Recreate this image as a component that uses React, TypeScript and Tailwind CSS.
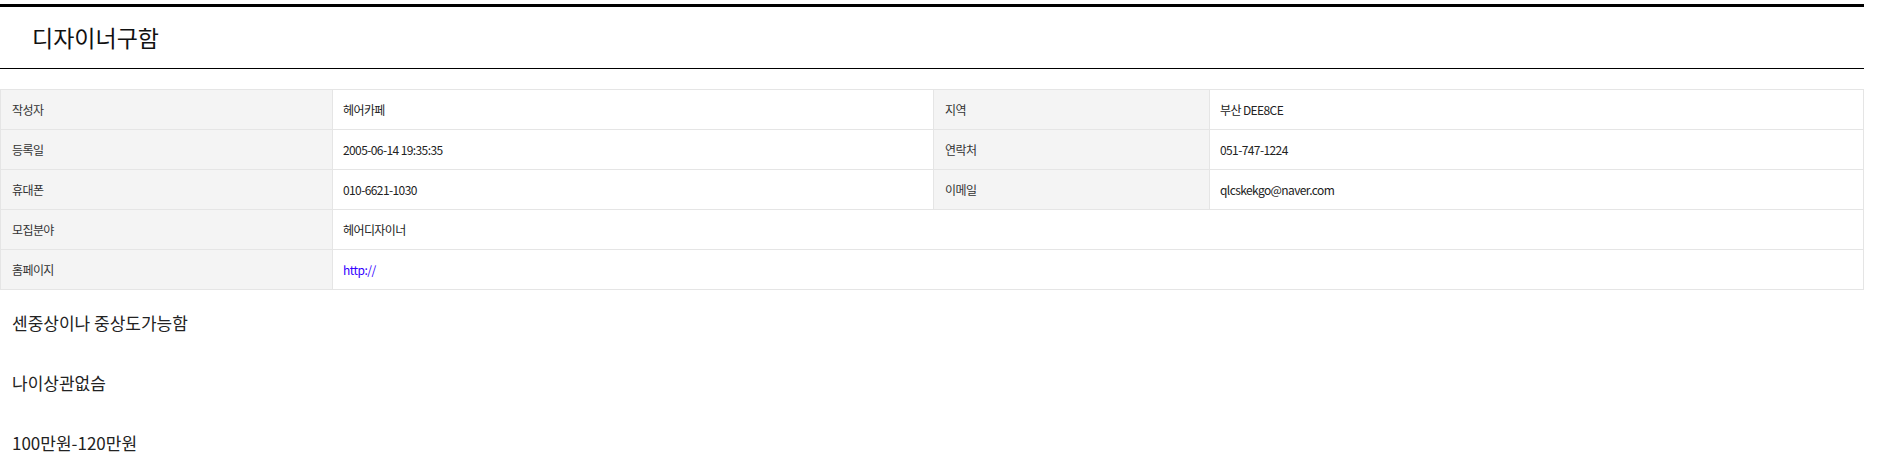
const font = {
  fontFamily: '"Noto Sans CJK KR", "Noto Sans", sans-serif',
};

type Row = {
  label: string;
  value: React.ReactNode;
  label2?: string;
  value2?: React.ReactNode;
};

const rows: Row[] = [
  { label: "작성자", value: "헤어카페", label2: "지역", value2: "부산 DEE8CE" },
  { label: "등록일", value: "2005-06-14 19:35:35", label2: "연락처", value2: "051-747-1224" },
  { label: "휴대폰", value: "010-6621-1030", label2: "이메일", value2: "qlcskekgo@naver.com" },
  { label: "모집분야", value: "헤어디자이너" },
  {
    label: "홈페이지",
    value: <a className="text-[#3300ff] tracking-[-0.5px]">http://</a>,
  },
];

export default function App() {
  return (
    <div className="w-[1864px] bg-white text-[#222]" style={font}>
      {/* Title bar */}
      <div className="mt-[4px] border-t-[3px] border-b border-black h-[65px] flex items-center pl-[32px]">
        <h1 className="text-[23px] text-[#111] leading-none">디자이너구함</h1>
      </div>

      {/* Info table */}
      <div className="mt-[20px] border-l border-t border-[#e5e5e5] text-[12px] tracking-[-0.6px]">
        {rows.map((r) => (
          <div key={r.label} className="flex h-[40px] border-b border-[#e5e5e5]">
            <div className="w-[332px] bg-[#f4f4f4] border-r border-[#e5e5e5] flex items-center pl-[11px] text-[#333]">
              {r.label}
            </div>
            {r.label2 ? (
              <>
                <div className="w-[601px] border-r border-[#e5e5e5] flex items-center pl-[10px] text-[#222]">
                  {r.value}
                </div>
                <div className="w-[276px] bg-[#f4f4f4] border-r border-[#e5e5e5] flex items-center pl-[11px] text-[#333]">
                  {r.label2}
                </div>
                <div className="flex-1 border-r border-[#e5e5e5] flex items-center pl-[10px] text-[#222]">
                  {r.value2}
                </div>
              </>
            ) : (
              <div className="flex-1 border-r border-[#e5e5e5] flex items-center pl-[10px] text-[#222]">
                {r.value}
              </div>
            )}
          </div>
        ))}
      </div>

      {/* Description */}
      <div className="mt-[21px] pl-[12px] flex flex-col gap-[36px] text-[17px] leading-[24px] text-[#222]">
        <p>센중상이나 중상도가능함</p>
        <p>나이상관없슴</p>
        <p>100만원-120만원</p>
      </div>
    </div>
  );
}
